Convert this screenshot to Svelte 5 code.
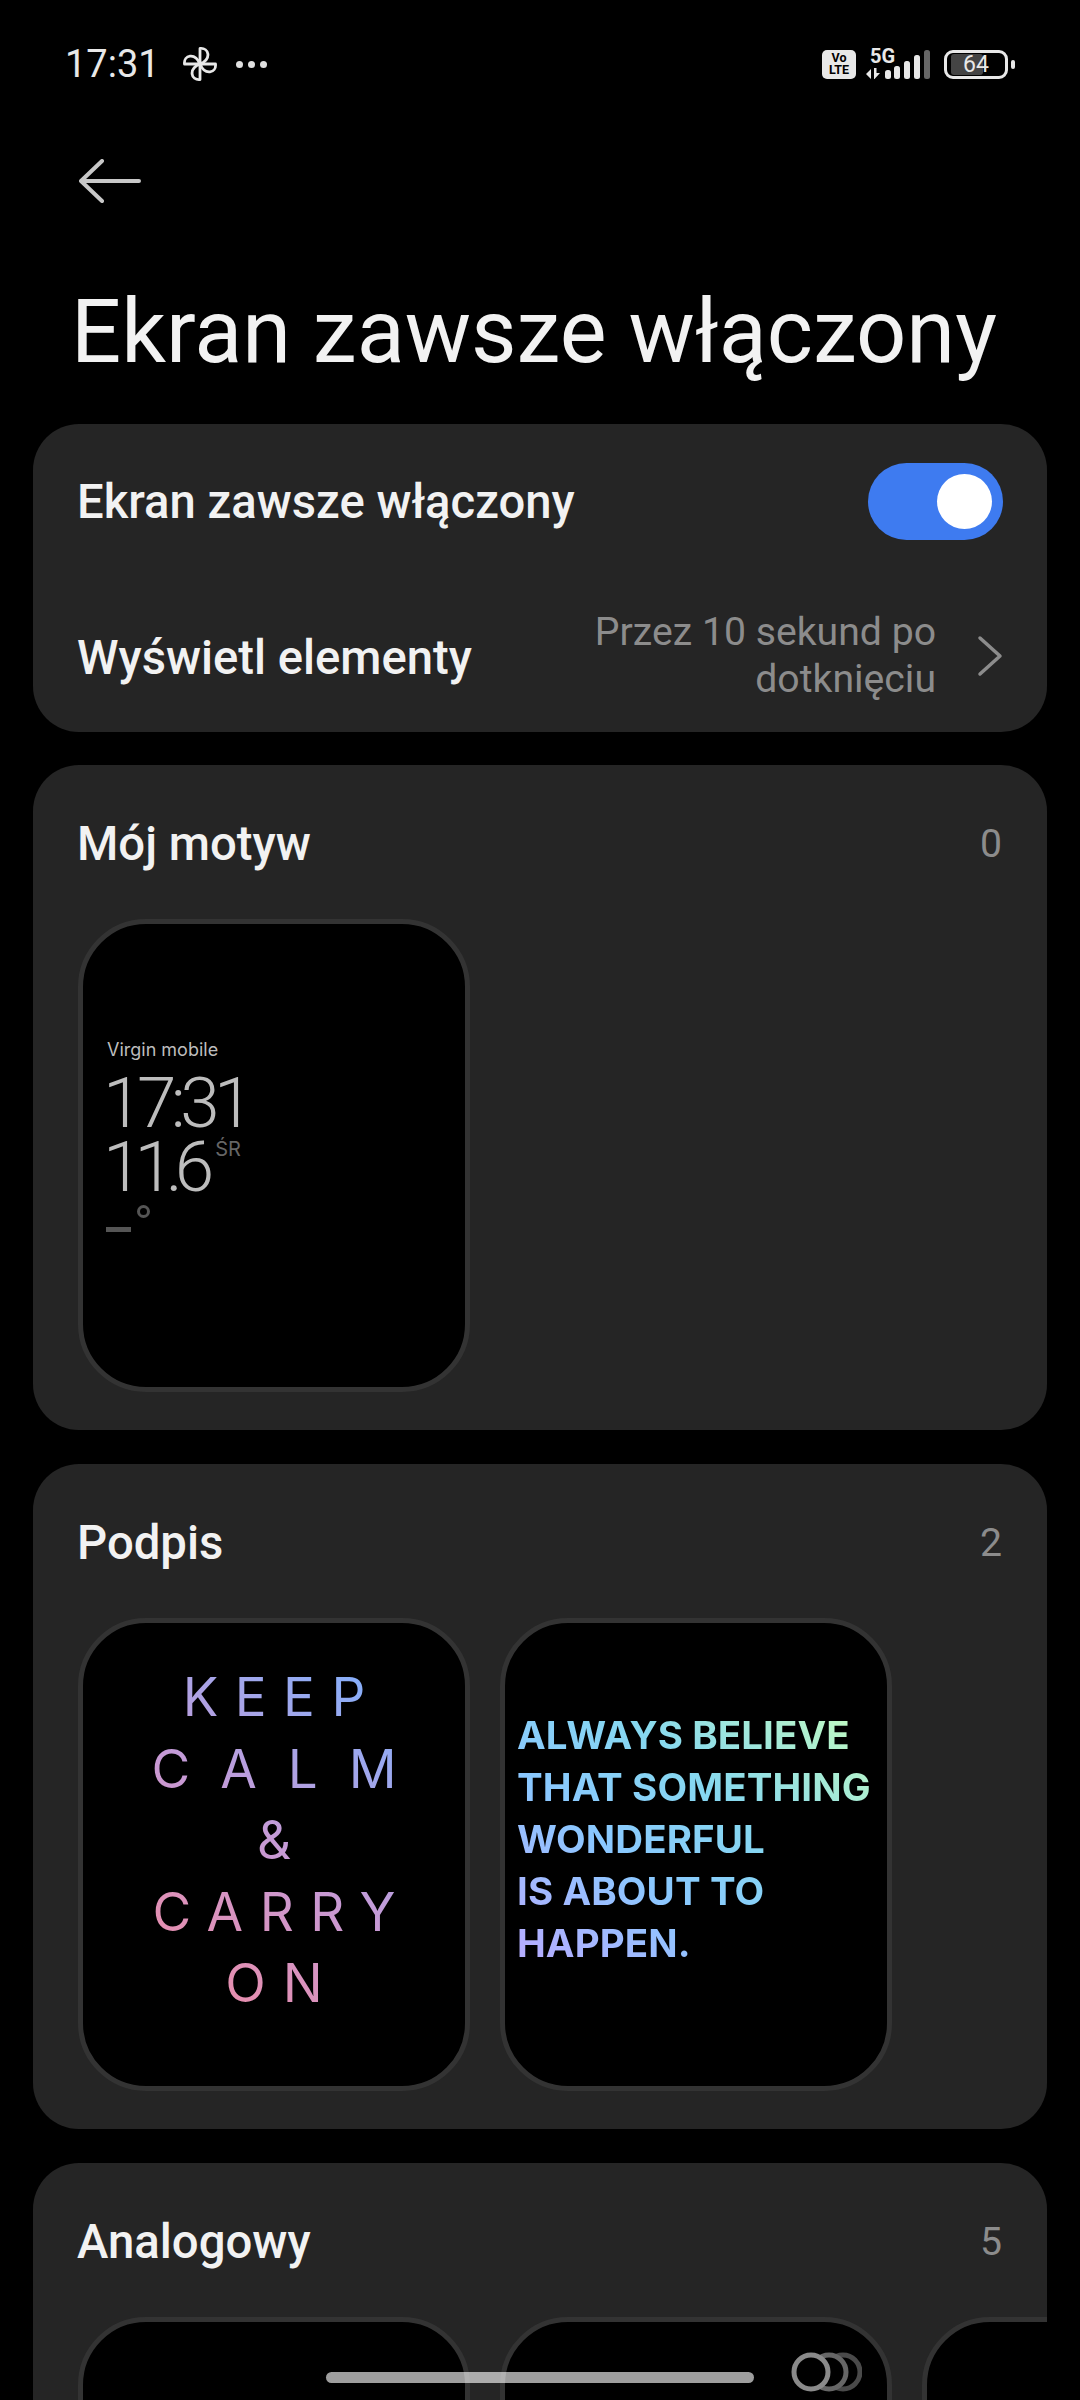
<script>
	const petals = [0, 90, 180, 270];
	const signal = [
		{ x: 0, h: 9 },
		{ x: 9, h: 13 },
		{ x: 19, h: 18 },
		{ x: 29, h: 24 },
		{ x: 39, h: 29, dim: true }
	];
</script>

<div class="screen">
	<header class="status">
		<div class="status-left">
			<span class="clock">17:31</span>
			<svg class="pinwheel" width="34" height="34" viewBox="0 0 34 34" fill="none" stroke="#e8e8e8" stroke-width="2.800">
				{#each petals as deg}
					<path d="M17 17H32.500C33.500 26 22 29 17 17Z" transform="rotate({deg} 17 17)" stroke-linejoin="round" />
				{/each}
			</svg>
			<div class="dots"><i></i><i></i><i></i></div>
		</div>
		<div class="status-right">
			<div class="volte"><span>Vo</span><span>LTE</span></div>
			<div class="net">
				<span class="five-g">5G</span>
				<svg class="arrows" width="14" height="11" viewBox="0 0 14 11" fill="#e8e8e8">
					<path d="M0 6L5 1V11ZM8 0H10.500V5H14L8.500 11H8Z" />
				</svg>
				<svg class="bars" width="46" height="29" viewBox="0 0 46 29">
					{#each signal as bar}
						<rect x={bar.x} y={29 - bar.h} width="6" height={bar.h} rx="2.500" fill={bar.dim ? '#666' : '#e8e8e8'} />
					{/each}
				</svg>
			</div>
			<div class="battery">
				<div class="battery-body">
					<div class="battery-level"></div>
					<span>64</span>
				</div>
				<div class="battery-nub"></div>
			</div>
		</div>
	</header>

	<nav class="nav">
		<svg width="62" height="44" viewBox="0 0 62 44" fill="none" stroke="#c8c8c8" stroke-width="4" stroke-linecap="round" stroke-linejoin="round">
			<path d="M60 22H3M23 2L2 22L23 42" />
		</svg>
	</nav>

	<h1 class="title">Ekran zawsze włączony</h1>

	<section class="card settings">
		<div class="row">
			<span class="row-label">Ekran zawsze włączony</span>
			<div class="toggle"><div class="knob"></div></div>
		</div>
		<div class="row">
			<span class="row-label">Wyświetl elementy</span>
			<div class="row-end">
				<span class="row-value">Przez 10 sekund po dotknięciu</span>
				<svg width="26" height="42" viewBox="0 0 26 42" fill="none" stroke="#8c8c8c" stroke-width="3.500" stroke-linecap="round" stroke-linejoin="round">
					<path d="M3 3L23 21L3 39" />
				</svg>
			</div>
		</div>
	</section>

	<section class="card">
		<div class="card-head">
			<h2>Mój motyw</h2>
			<span class="count">0</span>
		</div>
		<div class="thumbs">
			<div class="thumb aod">
				<div class="carrier">Virgin mobile</div>
				<div class="big-time">17:31</div>
				<div class="date-row">
					<span class="big-time date">11.6</span>
					<span class="weekday">ŚR</span>
				</div>
				<div class="temp"><i class="temp-dash"></i><i class="temp-deg"></i></div>
			</div>
		</div>
	</section>

	<section class="card">
		<div class="card-head">
			<h2>Podpis</h2>
			<span class="count">2</span>
		</div>
		<div class="thumbs">
			<div class="thumb quote-center">
				<div class="keep">
					<span class="l-keep">KEEP</span>
					<span class="l-calm">CALM</span>
					<span class="l-amp">&amp;</span>
					<span class="l-carry">CARRY</span>
					<span class="l-on">ON</span>
				</div>
			</div>
			<div class="thumb quote-left">
				<div class="believe">
					ALWAYS BELIEVE<br />
					THAT SOMETHING<br />
					WONDERFUL<br />
					IS ABOUT TO<br />
					HAPPEN.
				</div>
			</div>
		</div>
	</section>

	<section class="card">
		<div class="card-head">
			<h2>Analogowy</h2>
			<span class="count">5</span>
		</div>
		<div class="thumbs">
			<div class="thumb"></div>
			<div class="thumb">
				<svg class="rings" width="72" height="40" viewBox="0 0 72 40" fill="#000" stroke-width="5">
					<circle cx="53" cy="20" r="17" stroke="#4a4a4a" />
					<circle cx="39" cy="20" r="17" stroke="#666" />
					<circle cx="21" cy="20" r="17" stroke="#8a8a8a" />
				</svg>
			</div>
			<div class="thumb"></div>
		</div>
	</section>

	<div class="gesture"></div>
</div>

<style>
	:global(body) {
		margin: 0;
		background: #000;
	}
	.screen {
		position: relative;
		width: 1080px;
		height: 2400px;
		overflow: hidden;
		background: #000;
		color: #f2f2f2;
		font-family: Roboto, 'Liberation Sans', sans-serif;
	}

	/* status bar */
	.status {
		height: 126px;
		display: flex;
		align-items: center;
		justify-content: space-between;
		padding: 2px 65px 0;
		box-sizing: border-box;
	}
	.status-left {
		display: flex;
		align-items: center;
	}
	.clock {
		font-size: 38px;
		color: #e8e8e8;
		width: 118px;
	}
	.pinwheel {
		display: block;
	}
	.dots {
		display: flex;
		gap: 5px;
		margin-left: 19px;
	}
	.dots i {
		width: 7px;
		height: 7px;
		border-radius: 50%;
		background: #e0e0e0;
	}
	.status-right {
		display: flex;
		align-items: center;
	}
	.volte {
		width: 34px;
		height: 29px;
		border-radius: 5px;
		background: #e8e8e8;
		color: #000;
		font-size: 12.500px;
		font-weight: 700;
		line-height: 12px;
		display: flex;
		flex-direction: column;
		align-items: center;
		justify-content: center;
	}
	.net {
		position: relative;
		width: 60px;
		height: 30px;
		margin-left: 14px;
	}
	.five-g {
		position: absolute;
		left: 0;
		top: -3px;
		font-size: 20px;
		font-weight: 700;
		color: #e8e8e8;
		line-height: 20px;
	}
	.arrows {
		position: absolute;
		left: -4px;
		bottom: 0;
	}
	.bars {
		position: absolute;
		left: 15px;
		bottom: 0;
	}
	.battery {
		display: flex;
		align-items: center;
		margin-left: 14px;
	}
	.battery-body {
		position: relative;
		width: 64px;
		height: 29px;
		box-sizing: border-box;
		border: 3px solid #e8e8e8;
		border-radius: 9px;
		display: flex;
		align-items: center;
		justify-content: center;
		overflow: hidden;
	}
	.battery-level {
		position: absolute;
		left: 4px;
		top: 1px;
		bottom: 1px;
		width: 32px;
		border-radius: 3px;
		background: #444;
	}
	.battery-body span {
		position: relative;
		font-size: 23px;
		color: #e8e8e8;
	}
	.battery-nub {
		width: 4px;
		height: 9px;
		margin-left: 3px;
		border-radius: 2px;
		background: #e8e8e8;
	}

	/* header */
	.nav {
		height: 110px;
		display: flex;
		align-items: center;
		padding-left: 79px;
	}
	.title {
		margin: 0;
		height: 188px;
		padding-left: 71px;
		font-size: 88.300px;
		font-weight: 400;
		line-height: 192px;
		white-space: nowrap;
	}

	/* cards */
	.card {
		margin: 0 33px 34px;
		padding: 0 45px 38px 45px;
		border-radius: 46px;
		background: #252525;
		overflow: hidden;
	}
	.settings {
		margin-bottom: 33px;
		padding: 0 44px 0 44px;
		height: 308px;
		box-sizing: border-box;
	}
	.row {
		height: 154px;
		box-sizing: border-box;
		display: flex;
		align-items: center;
		justify-content: space-between;
	}
	.row-label {
		font-size: 47.200px;
		font-weight: 500;
		white-space: nowrap;
		padding-top: 2px;
	}
	.row + .row .row-label {
		padding-top: 4px;
	}
	.row + .row {
		padding-top: 2px;
	}
	.toggle {
		width: 135px;
		height: 77px;
		border-radius: 39px;
		background: #3e7bf0;
		display: flex;
		align-items: center;
		justify-content: flex-end;
		padding-right: 11px;
		box-sizing: border-box;
	}
	.knob {
		width: 55px;
		height: 55px;
		border-radius: 50%;
		background: #fff;
	}
	.row-end {
		display: flex;
		align-items: center;
		gap: 41px;
	}
	.row-value {
		width: 370px;
		font-size: 39.200px;
		line-height: 47px;
		text-align: right;
		color: #8c8c8c;
	}
	.card-head {
		height: 154px;
		box-sizing: border-box;
		padding-top: 3px;
		margin-left: -1px;
		display: flex;
		align-items: center;
		justify-content: space-between;
	}
	h2 {
		margin: 0;
		font-size: 47.300px;
		font-weight: 500;
	}
	.count {
		font-size: 39.200px;
		color: #8c8c8c;
	}
	.thumbs {
		display: flex;
		gap: 30px;
		margin-right: -45px;
	}

	/* preview tiles */
	.thumb {
		position: relative;
		flex: none;
		width: 392px;
		height: 473px;
		box-sizing: border-box;
		border: 5px solid #333;
		border-radius: 68px;
		background: #000;
	}
	.aod {
		padding: 114px 0 0 20px;
		font-family: Inter, Roboto, sans-serif;
		color: #bdbdbd;
	}
	.carrier {
		font-size: 18px;
		line-height: 24px;
		margin-left: 4px;
	}
	.big-time {
		font-family: Roboto, sans-serif;
		font-size: 71px;
		font-weight: 300;
		line-height: 65px;
		letter-spacing: -5.500px;
	}
	.aod > .big-time {
		margin-top: 8px;
	}
	.big-time.date {
		letter-spacing: -8px;
		line-height: 64px;
	}
	.date-row {
		display: flex;
		align-items: flex-start;
	}
	.weekday {
		font-size: 20px;
		line-height: 24px;
		color: #666;
		margin: 2px 0 0 9px;
	}
	.temp {
		position: relative;
		height: 40px;
		margin-top: 1px;
	}
	.temp-dash {
		position: absolute;
		left: 3px;
		top: 27px;
		width: 25px;
		height: 5px;
		background: #555;
	}
	.temp-deg {
		position: absolute;
		left: 34px;
		top: 5px;
		width: 13px;
		height: 13px;
		box-sizing: border-box;
		border: 3px solid #555;
		border-radius: 50%;
	}
	.keep {
		margin-top: 39px;
		display: flex;
		flex-direction: column;
		align-items: center;
		font-family: Inter, Lato, sans-serif;
		font-size: 53px;
		line-height: 71.600px;
		background: linear-gradient(38deg, #f28aa0 10%, #c69ad6 50%, #7fb2ff 90%);
		-webkit-background-clip: text;
		background-clip: text;
		color: transparent;
	}
	.l-keep {
		letter-spacing: 16.500px;
		margin-right: -16.500px;
	}
	.l-calm {
		letter-spacing: 31px;
		margin-right: -31px;
	}
	.l-carry {
		letter-spacing: 16.500px;
		margin-right: -16.500px;
	}
	.l-on {
		letter-spacing: 17px;
		margin-right: -17px;
	}
	.believe {
		margin: 86px 0 0 12px;
		font-family: Inter, Lato, sans-serif;
		font-size: 38.500px;
		font-weight: 700;
		line-height: 52px;
		letter-spacing: 0.100px;
		white-space: nowrap;
		background: linear-gradient(40deg, #b4aeff 5%, #8ac8ff 35%, #86d8f0 60%, #bdf8c4 92%);
		-webkit-background-clip: text;
		background-clip: text;
		color: transparent;
	}
	.rings {
		position: absolute;
		right: 25px;
		top: 30px;
	}

	.gesture {
		position: absolute;
		left: 326px;
		top: 2372px;
		width: 428px;
		height: 11px;
		border-radius: 6px;
		background: rgba(255, 255, 255, 0.62);
	}
</style>
